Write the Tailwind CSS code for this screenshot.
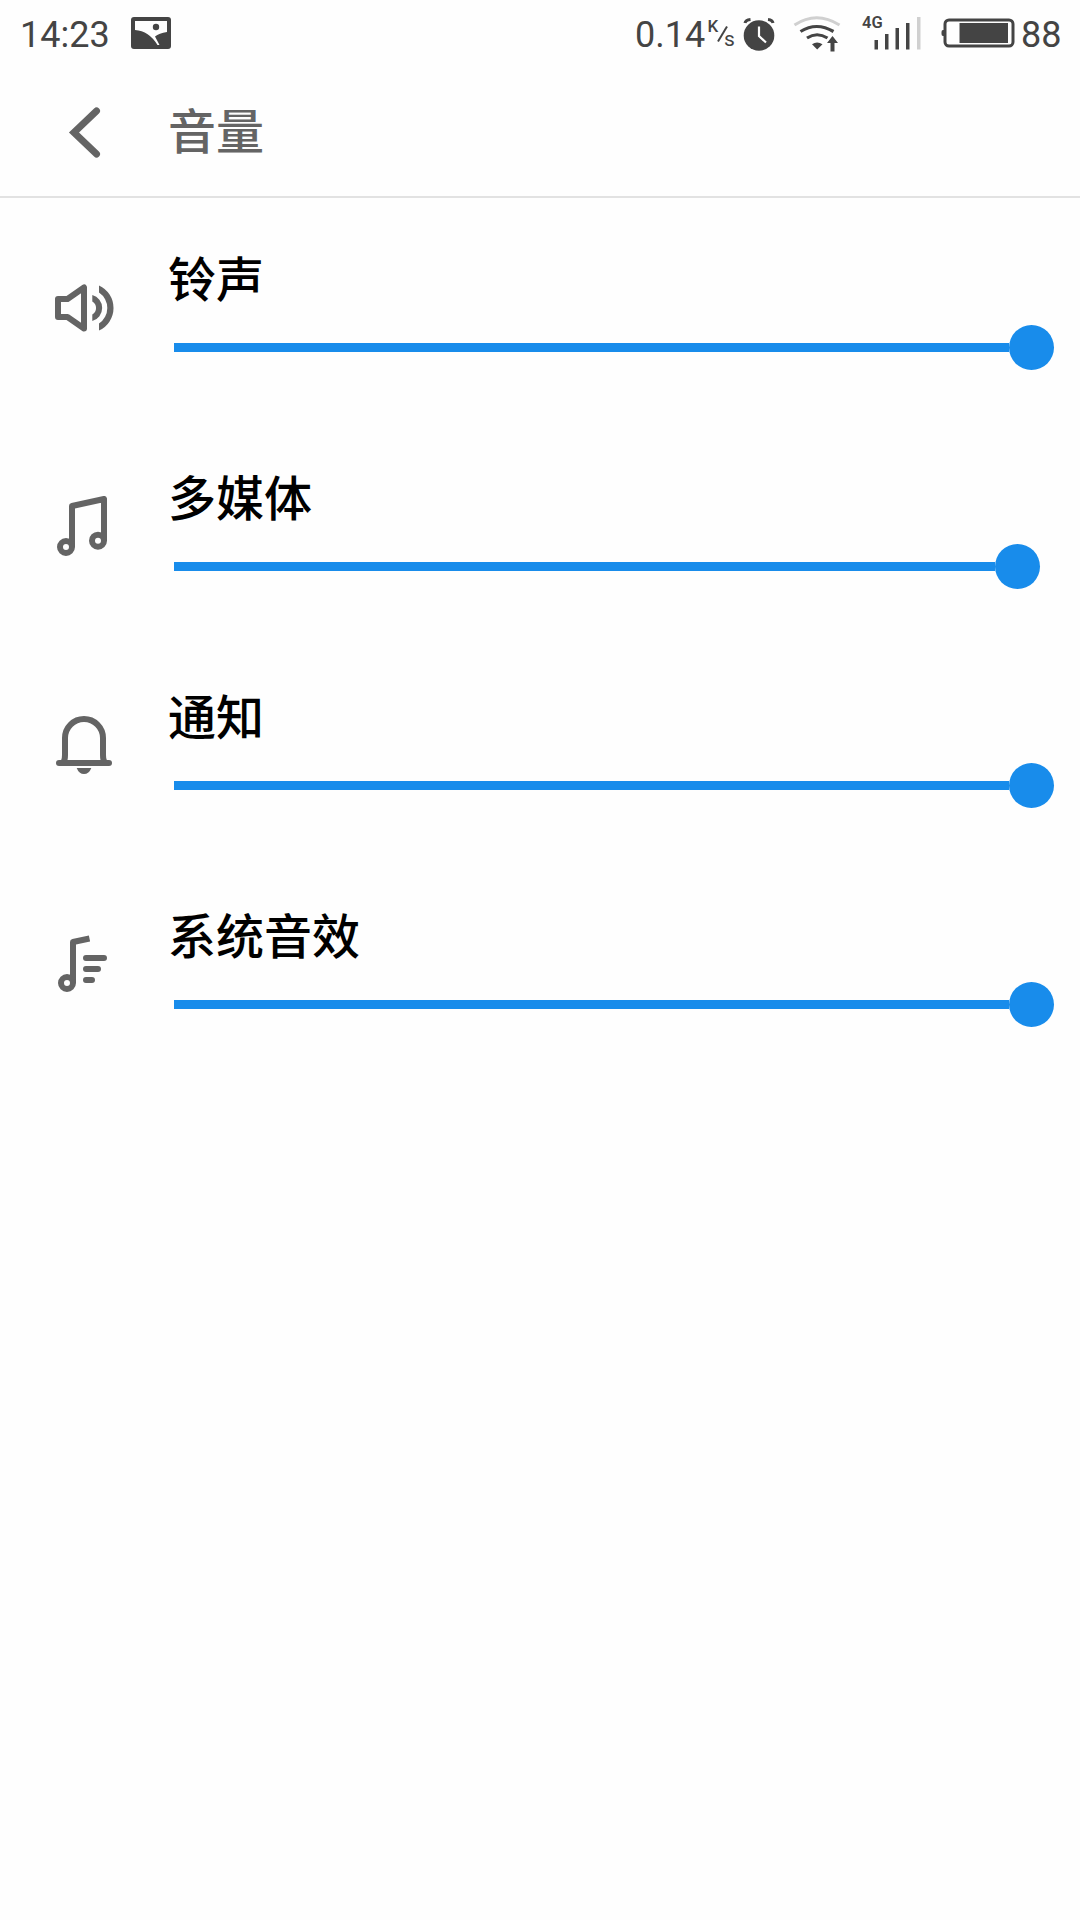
<!DOCTYPE html>
<html lang="zh-CN">
<head>
    <meta charset="UTF-8">
    <meta name="viewport" content="width=device-width, initial-scale=1.0">
    <title>音量</title>
    <script src="https://cdn.jsdelivr.net/npm/@tailwindcss/browser@4"></script>
</head>
<body class="min-h-screen bg-[#fefefe] font-['Noto_Sans_CJK_SC','Noto_Sans',sans-serif] text-black">

    <!-- Status bar -->
    <div class="flex h-[66px] items-center pl-5 pr-[19px] font-['Roboto',sans-serif] text-[36px] leading-[64px] text-[#444]">
        <span class="w-[111px] pt-[3px]">14:23</span>
        <svg class="h-[66px] w-10" viewBox="131 0 40 66">
            <rect x="131" y="17" width="40" height="32" rx="3" fill="#444"/>
            <path d="M135 21H167V32Q159 33 155 36.500L159.500 45H157.500Q149 31 135 30Z" fill="#fefefe"/>
            <circle cx="156" cy="27" r="3.2" fill="#444"/>
        </svg>

        <div class="ml-auto flex items-center">
            <span class="w-[72px] pt-[3px]">0.14</span>
            <svg class="h-[66px] w-7" viewBox="706 0 28 66" fill="#444">
                <text x="706.500" y="31.500" font-size="17" font-weight="500">K</text>
                <path d="M717 41.500L726 26.500" stroke="#444" stroke-width="2"/>
                <text x="723" y="46" font-size="21">s</text>
            </svg>
            <svg class="ml-2 h-[66px] w-8" viewBox="742.5 0 32 66" fill="none">
                <circle cx="758.5" cy="35.5" r="15.3" fill="#444"/>
                <path d="M744.5 23Q745 20 750 19.5M767.500 19.500Q772 20 772.5 23" stroke="#444" stroke-width="3"/>
                <path d="M758.500 26.500V36L765.500 42.500" stroke="#fefefe" stroke-width="2.200"/>
            </svg>
            <svg class="ml-[18px] h-[66px] w-12" viewBox="792.5 0 48 66" fill="none">
                <path d="M794 25Q816 10.500 839 25" stroke="#d0d0d0" stroke-width="3"/>
                <path d="M800 31.500Q816 21.500 833 31.500" stroke="#444" stroke-width="3.200"/>
                <path d="M806.500 38Q816.500 31.500 827 38" stroke="#444" stroke-width="3.200"/>
                <path d="M811.500 44.300Q816.500 40.800 822 44.300L816.700 49.500Z" fill="#444"/>
                <path d="M832 36L837.500 43H834V51.500H830V43H826.500Z" fill="#444"/>
            </svg>
            <svg class="ml-5 h-[66px] w-[62px]" viewBox="860.5 0 62 66" fill="#444">
                <text x="861.500" y="28" font-size="16.500" font-weight="600" font-family="Roboto">4G</text>
                <rect x="874" y="40" width="3.500" height="9.500"/>
                <rect x="884.500" y="34" width="3.500" height="15.500"/>
                <rect x="895" y="28" width="3.500" height="21.500"/>
                <rect x="905.500" y="23" width="3.500" height="26.500"/>
                <rect x="916.500" y="17" width="3.500" height="32.500" fill="#d0d0d0"/>
            </svg>
            <svg class="ml-[18px] h-[66px] w-[75px]" viewBox="940.5 0 75 66">
                <path d="M944 30H942.500Q941 30 941 32V34Q941 36 942.500 36H944Z" fill="#444"/>
                <rect x="944.500" y="20" width="68" height="26" rx="4" fill="none" stroke="#444" stroke-width="3"/>
                <rect x="959" y="23" width="48.500" height="20" fill="#444"/>
            </svg>
            <span class="ml-[5px] w-10 pt-[3px]">88</span>
        </div>
    </div>

    <!-- Header -->
    <header class="flex h-[132px] items-center border-b-2 border-[#e2e2e2] text-[#646464]">
        <svg class="ml-16 h-14 w-10" viewBox="0 0 40 56" fill="none" stroke="currentColor" stroke-width="7" stroke-linecap="round">
            <path d="M32.500 8L10 29.500L32.500 51"/>
        </svg>
        <h1 class="ml-16 pb-1.5 text-[48px] leading-[66px] font-medium">音量</h1>
    </header>

    <!-- Volume sliders -->
    <main>
        <section class="flex h-[219px]">
            <svg class="mt-[79px] ml-[54px] size-[60px] shrink-0 text-[#646464]" viewBox="0 0 60 60" fill="none">
                <path d="M4 22H13.500L30 10.500V51.500L13.500 40H4Z" stroke="currentColor" stroke-width="6" stroke-linejoin="round"/>
                <path d="M38.300 18A13.500 13.500 0 0 1 38.300 44V37.500A7.500 7.500 0 0 0 38.300 24.500Z" fill="currentColor"/>
                <path d="M45 8.500A24.700 24.700 0 0 1 45 53.500V46.600A18.800 18.800 0 0 0 45 15.400Z" fill="currentColor"/>
            </svg>
            <div class="ml-[54px] pt-[45px]">
                <h2 class="text-[48px] leading-[66px] font-medium">铃声</h2>
                <div class="mt-4 ml-[6px] flex items-center">
                    <div class="h-[9px] w-[835px] bg-[#188ceb]"></div>
                    <div class="size-[45px] rounded-full bg-[#188ceb]"></div>
                </div>
            </div>
        </section>

        <section class="flex h-[219px]">
            <svg class="mt-[79px] ml-[54px] size-[60px] shrink-0 text-[#646464]" viewBox="0 0 60 60" fill="none" stroke="currentColor" stroke-width="6" stroke-linejoin="round">
                <path d="M18 51V10L50 3V45"/>
                <circle cx="12" cy="51" r="6"/>
                <circle cx="44" cy="44.700" r="6"/>
            </svg>
            <div class="ml-[54px] pt-[45px]">
                <h2 class="text-[48px] leading-[66px] font-medium">多媒体</h2>
                <div class="mt-4 ml-[6px] flex items-center">
                    <div class="h-[9px] w-[821px] bg-[#188ceb]"></div>
                    <div class="size-[45px] rounded-full bg-[#188ceb]"></div>
                </div>
            </div>
        </section>

        <section class="flex h-[219px]">
            <svg class="mt-[79px] ml-[54px] size-[60px] shrink-0 text-[#646464]" viewBox="0 0 60 60" fill="none" stroke="currentColor" stroke-width="6" stroke-linecap="round">
                <path d="M9.500 47Q11 45 11 40V23A19 19 0 0 1 49 23V40Q49 45 50.500 47"/>
                <path d="M5 48H55"/>
                <path d="M22.700 53H37.300Q35 59 30 59T22.700 53Z" fill="currentColor" stroke="none"/>
            </svg>
            <div class="ml-[54px] pt-[45px]">
                <h2 class="text-[48px] leading-[66px] font-medium">通知</h2>
                <div class="mt-4 ml-[6px] flex items-center">
                    <div class="h-[9px] w-[835px] bg-[#188ceb]"></div>
                    <div class="size-[45px] rounded-full bg-[#188ceb]"></div>
                </div>
            </div>
        </section>

        <section class="flex h-[219px]">
            <svg class="mt-[79px] ml-[54px] size-[60px] shrink-0 text-[#646464]" viewBox="0 0 60 60" fill="none" stroke="currentColor" stroke-width="6" stroke-linejoin="round">
                <path d="M19 49V8L35.500 4.500"/>
                <circle cx="13" cy="49" r="6"/>
                <path d="M32 24H50M32 35H44M32 46H38" stroke-linecap="round"/>
            </svg>
            <div class="ml-[54px] pt-[45px]">
                <h2 class="text-[48px] leading-[66px] font-medium">系统音效</h2>
                <div class="mt-4 ml-[6px] flex items-center">
                    <div class="h-[9px] w-[835px] bg-[#188ceb]"></div>
                    <div class="size-[45px] rounded-full bg-[#188ceb]"></div>
                </div>
            </div>
        </section>
    </main>
</body>
</html>
